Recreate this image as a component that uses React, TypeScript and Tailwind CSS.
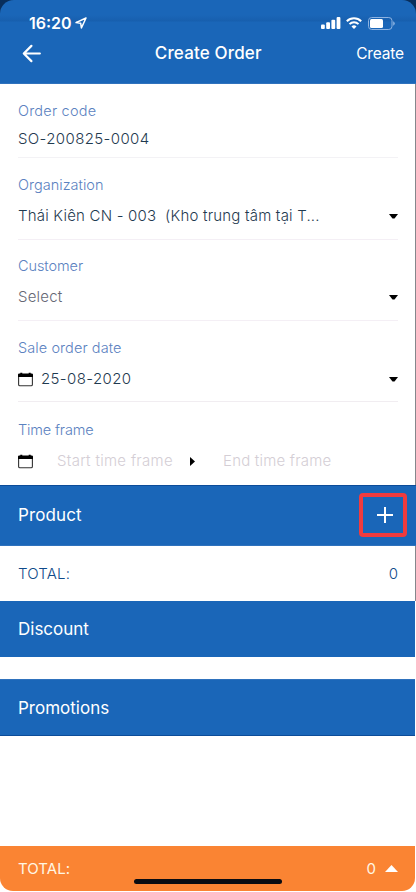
import type { ReactNode } from "react";

function Caret() {
  return (
    <svg className="h-[5px] w-[9px] shrink-0" viewBox="0 0 9 5" fill="#000">
      <path d="M0 0h9L5.5 4.4h-2z" />
    </svg>
  );
}

function CalendarIcon() {
  return (
    <svg className="h-[15px] w-[15px] shrink-0" viewBox="0 0 15 15" fill="none">
      <path d="M.6 3v9.4q0 1.3 1.3 1.3h11.2q1.3 0 1.3-1.3V3" stroke="#333" strokeWidth="1.1" />
      <path d="M0 5V2.6Q0 1.5 1.3 1.5h1V.7h2v.8h6.4V.7h2v.8h1Q15 1.5 15 2.6V5z" fill="#000" />
    </svg>
  );
}

function Label({ children, className }: { children: ReactNode; className: string }) {
  return <div className={`h-5 text-[14.5px] leading-5 font-light text-[#5b82bf] ${className}`}>{children}</div>;
}

function StatusBar() {
  return (
    <div className="flex h-[33px] items-start justify-between pt-[13px] pr-[21px] pl-[29px]">
      <div className="flex items-center">
        <span className="w-[43px] text-[16px] leading-5 font-semibold">16:20</span>
        <svg className="ml-[3px] h-3 w-3" viewBox="0 0 12 12" fill="none">
          <path d="M11 1 1 5.6l4.7.7.7 4.7z" stroke="white" strokeWidth="1.5" strokeLinejoin="round" />
        </svg>
      </div>
      <div className="flex h-5 items-center">
        <svg className="h-3 w-5" viewBox="0 0 20 12" fill="white">
          <rect x="0" y="7.5" width="3.8" height="4.5" rx="1" />
          <rect x="5.2" y="5.3" width="3.8" height="6.7" rx="1" />
          <rect x="10.4" y="2.8" width="3.8" height="9.2" rx="1" />
          <rect x="15.6" y="0" width="3.8" height="12" rx="1" />
        </svg>
        <svg className="ml-[5px] h-3 w-4" viewBox="0 0 16 12" fill="none" stroke="white" strokeWidth="2">
          <path d="M.8 4.3a10.2 10.2 0 0 1 14.4 0" />
          <path d="M3.5 7.1a6.4 6.4 0 0 1 9 0" />
          <path d="M8 12 5.5 9.4a3.6 3.6 0 0 1 5 0z" fill="white" stroke="none" />
        </svg>
        <svg className="ml-[6px] h-[13px] w-[27px]" viewBox="0 0 27 13" fill="none">
          <rect x=".5" y=".5" width="23.5" height="12" rx="3.2" stroke="#8db3e1" />
          <rect x="2" y="2" width="13" height="9" rx="1.5" fill="white" />
          <path d="M25.2 4.2q1.6.7 1.6 2.3t-1.6 2.3z" fill="#8db3e1" />
        </svg>
      </div>
    </div>
  );
}

export default function App() {
  return (
    <div className="h-[892px] w-[416px] overflow-hidden bg-white font-['Inter','Liberation_Sans',sans-serif]">
      <div className="bg-[#082e5c]">
        <header className="h-[84px] rounded-t-[14px] border-b border-[#2f72bd] bg-[linear-gradient(#1a66b8_0px,#1a66b8_15px,#175fae_21px,#1a66b8_22px)] text-white">
          <StatusBar />
          <div className="flex h-10 items-center pr-3 pl-[22px]">
            <svg className="h-[19px] w-[19px]" viewBox="0 0 19 19" fill="none" stroke="white" strokeWidth="2.2" strokeLinecap="round" strokeLinejoin="round">
              <path d="M18 9.5H2M9.5 1.8 1.8 9.5l7.7 7.7" />
            </svg>
            <h1 className="ml-[114px] w-[203px] text-[17px] leading-6 font-medium tracking-[0.15px]">Create Order</h1>
            <span className="pt-px text-[15.5px] leading-6 tracking-[-0.15px]">Create</span>
          </div>
        </header>
      </div>

      <main className="h-[401px] border-r border-[#85878c] pr-[17px] pl-[18px] text-[15px] font-light text-[#1f3a50]">
        <section className="h-[74px] border-b border-[#f3f2f5] pt-[17px]">
          <Label className="tracking-[0.2px]">Order code</Label>
          <div className="mt-2 leading-5 tracking-[0.38px]">SO-200825-0004</div>
        </section>
        <section className="h-[82px] border-b border-[#f4eff5] pt-[17px]">
          <Label className="tracking-[0.02px]">Organization</Label>
          <div className="mt-[11px] flex items-center justify-between leading-5">
            <span className="whitespace-pre tracking-[0.2px]">Thái Kiên CN - 003  (Kho trung tâm tại T...</span>
            <Caret />
          </div>
        </section>
        <section className="h-[81px] border-b border-[#f4eff5] pt-[16px]">
          <Label className="tracking-[-0.08px]">Customer</Label>
          <div className="mt-[11px] flex items-center justify-between leading-5 text-[#656774]">
            <span className="tracking-[0.2px]">Select</span>
            <Caret />
          </div>
        </section>
        <section className="h-[81px] border-b border-[#f1edf1] pt-[17px]">
          <Label className="tracking-[0.08px]">Sale order date</Label>
          <div className="mt-[11px] flex items-center leading-5">
            <CalendarIcon />
            <span className="ml-2 flex-1 tracking-[0.38px]">25-08-2020</span>
            <Caret />
          </div>
        </section>
        <section className="h-[83px] pt-[18px]">
          <Label className="tracking-[-0.15px]">Time frame</Label>
          <div className="mt-[11px] flex items-center leading-5 text-[#d4ced5]">
            <CalendarIcon />
            <span className="ml-6 w-[133px] tracking-[0.3px]">Start time frame</span>
            <svg className="h-[9px] w-[5px]" viewBox="0 0 5 9" fill="#000">
              <path d="M0 0v9l5-4.5z" />
            </svg>
            <span className="ml-7 tracking-[0.2px]">End time frame</span>
          </div>
        </section>
      </main>

      <div className="flex h-[61px] items-center justify-between border-y border-t-[#0c4c99] border-b-[#2f72bd] bg-[#1a66b8] pr-[9px] pl-[18px] text-white">
        <h2 className="pb-[2px] text-[17px] leading-6 tracking-[0.1px]">Product</h2>
        <button className="mb-px flex h-11 w-12 items-center justify-center rounded-[4px] border-[4px] border-[#f13b3e] pb-px pl-1">
          <svg className="h-4 w-4" viewBox="0 0 16 16" stroke="white" strokeWidth="2">
            <path d="M0 8h16M8 0v16" />
          </svg>
        </button>
      </div>
      <div className="flex h-[55px] items-center justify-between border-r border-[#85878c] pr-[17px] pl-[18px] text-[15px] leading-5 font-light text-[#0f4a8a]">
        <span className="tracking-[0.2px]">TOTAL:</span>
        <span>0</span>
      </div>
      <h2 className="mr-px flex h-14 items-center bg-[#1a66b8] pl-[18px] text-[17px] leading-6 text-white">Discount</h2>
      <h2 className="mt-[22px] mr-px flex h-[57px] items-center border-y border-t-[#2f72bd] border-b-[#0c4c99] bg-[#1a66b8] pl-[18px] text-[17px] leading-6 text-white">Promotions</h2>

      <footer className="mt-[110px] mr-px h-[45px] rounded-b-[13px] bg-[#fa8433] text-[15px] text-[#fff6e4]">
        <div className="flex h-[33px] items-end pr-[17px] pl-[18px] leading-5">
          <span className="flex-1 tracking-[0.05px]">TOTAL:</span>
          <span>0</span>
          <svg className="mb-[7px] ml-[9px] h-[7px] w-[13px]" viewBox="0 0 13 7" fill="white">
            <path d="M0 7h13L6.5 0z" />
          </svg>
        </div>
        <div className="ml-[134px] h-[5px] w-[148px] rounded-full bg-[#0a0c12]" />
      </footer>
    </div>
  );
}
